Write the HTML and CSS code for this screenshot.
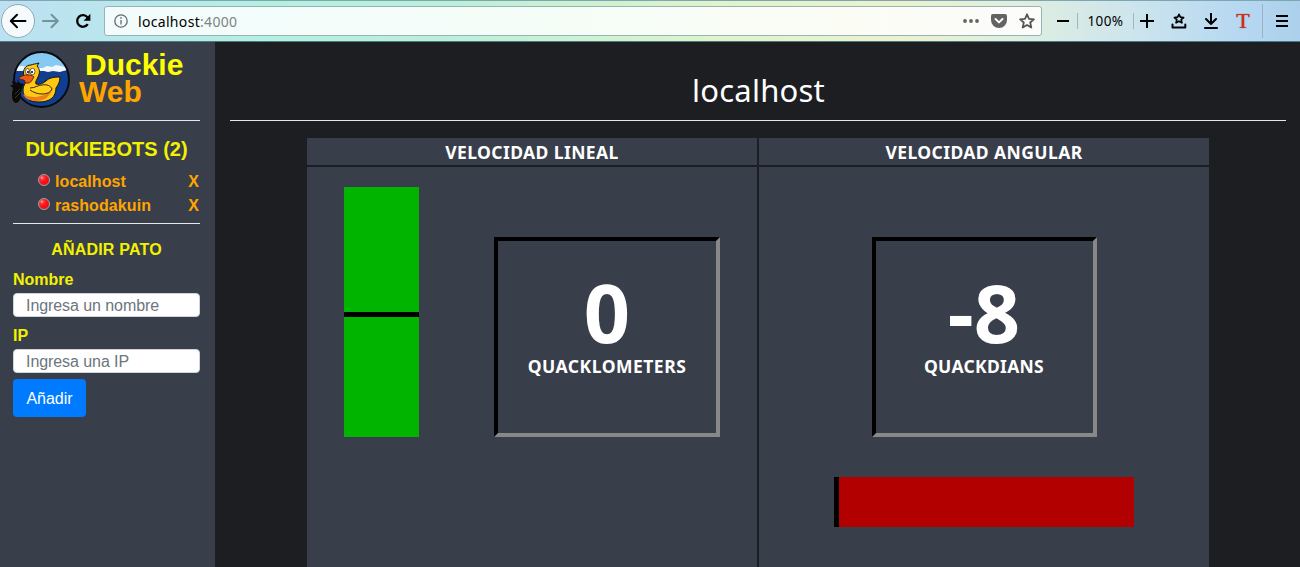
FILE: index.html
```html
<!DOCTYPE html>
<html lang="es">
<head>
<meta charset="utf-8">
<title>Duckie Web</title>
<link rel="stylesheet" href="styles.css">
</head>
<body>
<header class="toolbar">
  <div class="back"><svg width="18" height="16" viewBox="0 0 18 16"><path d="M16.500 8H2M8 1.800L1.800 8 8 14.200" class="ink"/></svg></div>
  <svg class="forward" width="18" height="16" viewBox="0 0 18 16"><path d="M1 8h14.500M9.500 1.800L15.800 8l-6.300 6.200"/></svg>
  <svg class="reload" width="16" height="16" viewBox="0 0 16 16"><path d="M12.800 11.200A5.800 5.800 0 1 1 12.700 4.600" class="ink thick"/><path d="M15.400.8v7H8.600z"/></svg>
  <div class="urlbar">
    <svg class="info" width="14" height="14" viewBox="0 0 14 14"><circle cx="7" cy="7" r="6.200"/><path d="M7 6v4.500M7 3v1.700"/></svg>
    <span class="url">localhost<span class="port">:4000</span></span>
    <svg class="dots" width="16" height="4" viewBox="0 0 16 4"><circle cx="2" cy="2" r="1.900"/><circle cx="8" cy="2" r="1.900"/><circle cx="14" cy="2" r="1.900"/></svg>
    <svg class="pocket" width="16" height="14" viewBox="0 0 16 14"><path class="body" d="M2 0h12a2 2 0 0 1 2 2v4a8 8 0 0 1-16 0V2a2 2 0 0 1 2-2z"/><path class="chevron" d="M4.500 5L8 8.400 11.500 5"/></svg>
    <svg class="star" width="16" height="16" viewBox="0 0 16 16"><path d="M8 1.300l2 4.500 4.900.5-3.700 3.200 1.100 5L8 11.900l-4.300 2.600 1.100-5L1.100 6.300 6 5.800z"/></svg>
  </div>
  <svg class="minus" width="12" height="14" viewBox="0 0 12 14"><path d="M0 7h12" class="ink"/></svg>
  <i class="sep sep-a"></i>
  <span class="zoom">100%</span>
  <i class="sep sep-b"></i>
  <svg class="plus" width="14" height="14" viewBox="0 0 14 14"><path d="M0 7h14M7 0v14" class="ink"/></svg>
  <svg class="marks" width="16" height="16" viewBox="0 0 16 16"><path d="M1.500 11.500V14.500h12.800V11.500" class="ink"/><path class="ink thin" d="M8 1.300l1.400 2.900 3.200.3-2.400 2.100.7 3.200L8 8.200 5.100 9.800l.7-3.200-2.400-2.100 3.200-.3z"/></svg>
  <svg class="download" width="14" height="16" viewBox="0 0 14 16"><path d="M7 0v11M2 6l5 5 5-5M1 15h12" class="ink"/></svg>
  <span class="addon">T</span>
  <i class="rule"></i>
  <svg class="menu" width="12" height="12" viewBox="0 0 12 12"><path d="M0 1h12M0 6h12M0 11h12" class="ink"/></svg>
</header>
<div class="app">
  <aside class="sidebar">
    <div class="brand">
      <svg class="logo" width="60" height="58" viewBox="0 0 60 58">
        <defs><clipPath id="disc"><circle cx="31.500" cy="28.500" r="27.500"/></clipPath></defs>
        <g clip-path="url(#disc)">
          <path fill="#85caf2" d="M0 0h60v25H0z"/>
          <path fill="#103f91" d="M0 19h60v39H0z"/>
          <path fill="#f3f8fc" d="M0 16l12-1 12 2 9 0 4-2 5 1 4-2 5 1 7 2v2l-5 1-3 1-7-1-5 1-4-1-7 0H4z"/>
        </g>
        <circle cx="31.500" cy="28.500" r="27.500" fill="none" stroke="#070b10" stroke-width="1.900"/>
        <path fill="#ffc814" stroke="#171310" stroke-width="1" d="M14 26C12 18 16 14 21 14c2-1 5-1 8-2l-2 3c3 3 3 7 1 11-1 3-3 4-2 7 5 1 7-1 10-3 3-3 7-4 14-4 0 5-2 8-4 11 0 9-6 14-17 14-10 0-16-5-16-12 0-5 3-7 4-10z"/>
        <path fill="#ed7f1a" d="M13 43c8 5 20 4 29-4-3 7-8 11-15 11s-12-2-14-7z"/>
        <path fill="#ffd01a" stroke="#241509" stroke-width=".9" d="M20 37c5 0 8-3 12-3 5-1 9 1 10 4-1 3-5 5-10 5-5 0-9-2-12-4"/>
        <ellipse cx="17.500" cy="20.500" rx="2" ry="3" fill="#fff" stroke="#222" stroke-width=".7"/>
        <ellipse cx="22.500" cy="20.500" rx="2.500" ry="3.200" fill="#fff" stroke="#222" stroke-width=".7"/>
        <circle cx="18" cy="21" r="1"/><circle cx="22" cy="21" r="1"/>
        <path fill="#ed5b16" stroke="#3e1509" stroke-width=".8" d="M9 26c3 0 5-3 9-2 2 0 4 0 6 2-2 3-3 6-6 6-3 1-3-2-4-3-3 0-5-1-5-3z"/>
        <path fill="#0b0a08" d="M2 30l3 1 3 1-1-4 3 4 4 1-2 4-1 5c0 5-1 9-5 10-4-1-4-6-4-10l1-5-3-3 3 0-1-4z"/>
        <path d="M5 43l5-5M5 47l6-6" stroke="#605331" stroke-width=".6" fill="none"/>
      </svg>
      <div class="brand-name"><span class="duckie">Duckie</span><span class="web">Web</span></div>
    </div>
    <hr class="line">
    <h2 class="bots-title">DUCKIEBOTS (2)</h2>
    <ul class="bots">
      <li class="bot"><i class="led"></i><span class="bot-name">localhost</span><span class="remove">X</span></li>
      <li class="bot"><i class="led"></i><span class="bot-name">rashodakuin</span><span class="remove">X</span></li>
    </ul>
    <hr class="line">
    <h3 class="form-title">AÑADIR PATO</h3>
    <form class="form">
      <label class="label">Nombre</label>
      <input class="field" type="text" placeholder="Ingresa un nombre">
      <label class="label label-ip">IP</label>
      <input class="field" type="text" placeholder="Ingresa una IP">
      <button class="submit" type="button">Añadir</button>
    </form>
  </aside>
  <main class="main">
    <h1 class="title">localhost</h1>
    <hr class="line">
    <div class="grid">
      <div class="head">VELOCIDAD LINEAL</div>
      <div class="head">VELOCIDAD ANGULAR</div>
      <section class="cell linear">
        <div class="bar-v"><i class="mark-v"></i></div>
        <div class="gauge gauge-linear"><span class="value">0</span><span class="unit">QUACKLOMETERS</span></div>
      </section>
      <section class="cell angular">
        <div class="gauge gauge-angular"><span class="value">-8</span><span class="unit unit-angular">QUACKDIANS</span></div>
        <div class="bar-h"><i class="mark-h"></i></div>
      </section>
    </div>
  </main>
</div>
</body>
</html>
```
FILE: styles.css
```css
* { box-sizing: border-box; }
body { margin: 0; height: 567px; overflow: hidden; background: #1d1e22; font-family: "Liberation Sans", Arial, sans-serif; }
svg { display: block; flex: none; }
h1, h2, h3, ul { margin: 0; padding: 0; }

.toolbar { display: flex; align-items: center; height: 42px; padding-left: 1px; border-top: 1px solid #7ba6b2; border-bottom: 1px solid #497b84;
  background: linear-gradient(90deg, #bde0f3 0, #b9e8ea 150px, #b5f0df 270px, #bcefd9 450px, #def3cc 700px, #edf2cf 900px, #dfeedf 1020px, #cde5ec 1130px, #b9d9f2 1230px, #acd0eb 1300px); font-family: "Noto Sans", sans-serif; }
.ink { fill: none; stroke: #000; stroke-width: 2; stroke-linecap: round; stroke-linejoin: round; }
.thick { stroke-width: 2.300; stroke-linecap: butt; }
.thin { stroke-width: 1.700; }
.back { display: flex; align-items: center; justify-content: center; width: 34px; height: 34px; flex: none; border: 1px solid #8faab4; border-radius: 50%; background: #f5fafd; }
.forward { margin-left: 7px; fill: none; stroke: #73939b; stroke-width: 2; stroke-linecap: round; stroke-linejoin: round; }
.reload { margin-left: 15px; }
.urlbar { display: flex; align-items: center; flex: none; width: 938px; height: 30px; margin-left: 13px; padding-left: 9px; border: 1px solid #98b3b4; border-radius: 3px; background: linear-gradient(90deg, #f2fcfc, #f4fdf8 40%, #fbfdf5 80%, #fcfcfb); }
.info { fill: none; stroke: #67696a; stroke-width: 1.300; }
.url { width: 825px; margin-left: 10px; padding-top: 1px; font-size: 14px; line-height: 20px; letter-spacing: .32px; color: #000; }
.port { color: #828282; }
.dots { fill: #636363; }
.pocket { margin-left: 12px; }
.body { fill: #636363; }
.chevron { fill: none; stroke: #fff; stroke-width: 2; stroke-linecap: round; stroke-linejoin: round; }
.star { margin-left: 12px; fill: none; stroke: #555; stroke-width: 1.800; stroke-linejoin: round; }
.minus { margin-left: 15px; }
.sep { flex: none; width: 1px; height: 16px; background: #a4b6b9; }
.sep-a { margin-left: 8px; }
.zoom { width: 55px; text-align: center; font-size: 13.500px; line-height: 18px; letter-spacing: .4px; color: #000; }
.plus { margin-left: 6px; }
.marks { margin-left: 17px; }
.download { margin-left: 17px; }
.addon { width: 24px; margin-left: 13px; text-align: center; font: 22px/24px "Liberation Serif", serif; color: #d92c10; text-shadow: 0 0 1px #7d2a20; }
.rule { flex: none; width: 1px; height: 34px; margin-left: 7px; background: #96b3c6; }
.menu { margin-left: 13px; }

.app { display: flex; height: 525px; }
.sidebar { width: 215px; flex: none; padding: 8px 15px 0 13px; background: #393e4b; font-weight: bold; color: #ff0; }
.brand { display: flex; height: 70px; margin-left: -3px; }
.logo { margin-top: 1px; }
.brand-name { display: flex; flex-direction: column; margin: 1px 0 0 9px; font-size: 30px; line-height: 27px; }
.duckie { margin-left: 6px; }
.web { color: orange; }
.line { height: 1px; margin: 0; border: 0; background: #e5e6e7; }
.bots-title { margin-top: 16px; text-align: center; font-size: 20px; line-height: 24px; color: #f2f200; }
.bots { margin: 9px 0 5px; list-style: none; font-size: 16px; line-height: 24px; color: orange; }
.bot { display: flex; padding: 0 1px 0 25px; }
.led { width: 12px; height: 12px; margin: 4px 5px 0 0; border: 1px solid #a2a4a9; border-radius: 50%; background: radial-gradient(circle at 30% 28%, #ffb8b8 0, #ff3838 18%, #fb1018 45%, #ee1018 80%); }
.bot-name { flex: 1; letter-spacing: .08px; }
.form-title { margin-top: 14px; text-align: center; font-size: 16px; line-height: 24px; letter-spacing: .2px; color: #f2f200; }
.form { display: flex; flex-direction: column; margin-top: 6px; }
.label { font-size: 16px; line-height: 24px; color: #f2f200; }
.label-ip { margin-top: 7px; }
.field { width: 187px; height: 24px; margin: 1px 0 0; padding: 2px 12px 0; border: 1px solid #ced4da; border-radius: 4px; background: #fff; font: 16px "Liberation Sans", Arial, sans-serif; letter-spacing: -.07px; }
.field::placeholder { color: #6c757d; opacity: 1; }
.submit { width: 73px; height: 38px; margin-top: 6px; padding: 1px 0 0; border: 0; border-radius: 4px; background: #007bff; color: #fff; font: 16px "Liberation Sans", Arial, sans-serif; }

.main { flex: 1; padding: 26px 14px 0 15px; font-family: "Noto Sans", sans-serif; color: #fff; }
.title { height: 52px; padding-left: 1px; text-align: center; font-size: 31px; font-weight: 400; line-height: 44px; letter-spacing: .2px; }
.grid { display: grid; grid-template-columns: 450px 450px; grid-template-rows: 27px 402px; gap: 2px; width: 902px; margin: 17px 0 0 77px; }
.head { background: #393e4b; text-align: center; font-size: 17.500px; font-weight: 700; line-height: 29px; letter-spacing: .42px; white-space: nowrap; }
.cell { background: #393e4b; }
.linear { display: flex; align-items: flex-start; padding: 20px 0 0 37px; }
.bar-v { display: flex; align-items: center; width: 75px; height: 250px; background: #00b400; }
.mark-v { width: 75px; height: 5px; margin-top: 5px; background: #000; }
.gauge { display: flex; flex-direction: column; align-items: center; height: 200px; padding-top: 25px; border: 4px solid; border-color: #000 #888 #888 #000; font-weight: 700; }
.gauge-linear { width: 226px; margin: 50px 0 0 75px; }
.gauge-angular { width: 225px; }
.value { font-size: 81px; line-height: 91px; }
.unit { font-size: 17.500px; line-height: 18px; letter-spacing: .5px; }
.unit-angular { letter-spacing: .3px; }
.angular { display: flex; flex-direction: column; align-items: center; padding-top: 70px; }
.bar-h { width: 300px; height: 50px; margin-top: 40px; display: flex; background: #b20000; }
.mark-h { width: 5px; background: #000; }
```
